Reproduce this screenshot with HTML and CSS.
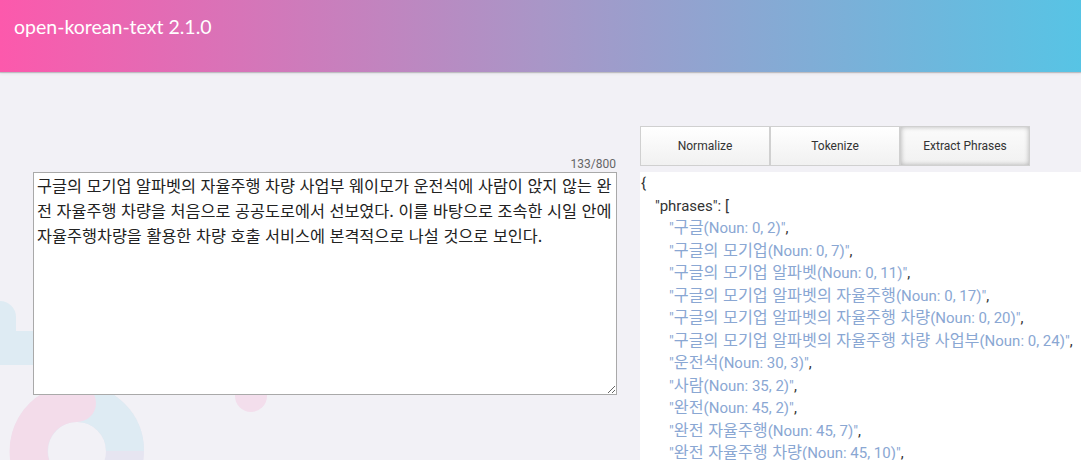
FILE: index.html
```html
<!DOCTYPE html>
<html lang="ko">
<head>
<meta charset="utf-8">
<title>open-korean-text</title>
<link rel="stylesheet" href="styles.css">
</head>
<body>
<svg class="decor" width="300" height="460" viewBox="0 0 300 460" aria-hidden="true">
  <rect x="-20" y="301" width="36" height="64" rx="16" fill="#deebf3"/>
  <rect x="-20" y="331" width="100" height="34" fill="#deebf3"/>
  <circle cx="251" cy="396" r="16" fill="#f3deec"/>
  <circle cx="77" cy="451" r="48" fill="none" stroke="#e6e5f1" stroke-width="38"/>
  <path d="M77 403 A48 48 0 0 1 125 451" fill="none" stroke="#deebf3" stroke-width="38"/>
  <path d="M35 475 A48 48 0 0 1 77 403" fill="none" stroke="#f3dcea" stroke-width="38" stroke-linecap="round"/>
</svg>
<header class="topbar">
  <h1 class="title">open-korean-text 2.1.0</h1>
</header>
<main class="main">
  <section class="input-col">
    <div class="counter">133/800</div>
    <textarea class="input-text">구글의 모기업 알파벳의 자율주행 차량 사업부 웨이모가 운전석에 사람이 앉지 않는 완전 자율주행 차량을 처음으로 공공도로에서 선보였다. 이를 바탕으로 조속한 시일 안에 자율주행차량을 활용한 차량 호출 서비스에 본격적으로 나설 것으로 보인다.</textarea>
  </section>
  <section class="output-col">
    <div class="tabs">
      <button class="tab">Normalize</button>
      <button class="tab">Tokenize</button>
      <button class="tab active">Extract Phrases</button>
    </div>
    <div class="json">
      <div class="l0">{</div>
      <div class="l1">"phrases": [</div>
      <div class="l2"><span class="str">"<span class="ko">구글</span>(Noun: 0, 2)"</span>,</div>
      <div class="l2"><span class="str">"<span class="ko">구글의 모기업</span>(Noun: 0, 7)"</span>,</div>
      <div class="l2"><span class="str">"<span class="ko">구글의 모기업 알파벳</span>(Noun: 0, 11)"</span>,</div>
      <div class="l2"><span class="str">"<span class="ko">구글의 모기업 알파벳의 자율주행</span>(Noun: 0, 17)"</span>,</div>
      <div class="l2"><span class="str">"<span class="ko">구글의 모기업 알파벳의 자율주행 차량</span>(Noun: 0, 20)"</span>,</div>
      <div class="l2"><span class="str">"<span class="ko">구글의 모기업 알파벳의 자율주행 차량 사업부</span>(Noun: 0, 24)"</span>,</div>
      <div class="l2"><span class="str">"<span class="ko">운전석</span>(Noun: 30, 3)"</span>,</div>
      <div class="l2"><span class="str">"<span class="ko">사람</span>(Noun: 35, 2)"</span>,</div>
      <div class="l2"><span class="str">"<span class="ko">완전</span>(Noun: 45, 2)"</span>,</div>
      <div class="l2"><span class="str">"<span class="ko">완전 자율주행</span>(Noun: 45, 7)"</span>,</div>
      <div class="l2"><span class="str">"<span class="ko">완전 자율주행 차량</span>(Noun: 45, 10)"</span>,</div>
    </div>
  </section>
</main>
</body>
</html>
```
FILE: styles.css
```css
html, body {
  margin: 0;
  padding: 0;
  height: 460px;
  overflow: hidden;
}
body {
  background: #f2f1f6;
  font-family: Roboto, "Noto Sans CJK KR", sans-serif;
  position: relative;
}
.decor {
  position: absolute;
  left: 0;
  top: 0;
  z-index: 0;
}
.topbar {
  position: relative;
  z-index: 1;
  height: 72px;
  background: linear-gradient(to right, #fc59ac 0%, #a996c7 50%, #57c4e5 100%);
  box-shadow: 0 1px 1px rgba(0, 0, 0, 0.18), 0 2px 3px rgba(0, 0, 0, 0.05);
}
.title {
  margin: 0;
  padding: 15px 0 0 14px;
  font-family: Lato, "Open Sans", sans-serif;
  font-weight: 400;
  font-size: 19.5px;
  line-height: 24px;
  color: #ffffff;
}
.main {
  position: relative;
  z-index: 1;
  display: flex;
  gap: 23px;
  padding: 54px 0 0 33px;
}
.input-col {
  width: 584px;
  padding-top: 30px;
  display: flex;
  flex-direction: column;
}
.counter {
  text-align: right;
  font-size: 12px;
  line-height: 16px;
  color: #666666;
  padding-right: 1px;
}
.input-text {
  box-sizing: border-box;
  width: 584px;
  height: 223px;
  margin: 0;
  padding: 0 3px;
  border: 1px solid #a9a9a9;
  background: #ffffff;
  font-family: "Noto Sans CJK KR", sans-serif;
  font-size: 16.3px;
  line-height: 25px;
  color: #222222;
  resize: both;
  outline: none;
}
.output-col {
  flex: 1;
  display: flex;
  flex-direction: column;
}
.tabs {
  display: flex;
  height: 40px;
  margin-bottom: 6px;
}
.tab {
  box-sizing: border-box;
  width: 130px;
  height: 40px;
  margin: 0;
  border: 1px solid #d0d0d0;
  background: linear-gradient(to bottom, #ffffff 0%, #f1f1f1 100%);
  font-family: Roboto, sans-serif;
  font-size: 12px;
  color: #333333;
  padding: 0;
}
.tab.active {
  box-shadow: inset 0 0 5px rgba(0, 0, 0, 0.28);
  background: linear-gradient(to bottom, #fbfbfb 0%, #f1f1f1 100%);
}
.json {
  background: #ffffff;
  padding: 0 0 0 1px;
  font-size: 15px;
  line-height: 22.5px;
  color: #333333;
  white-space: nowrap;
  min-height: 300px;
}
.l1 {
  padding-left: 14px;
}
.l2 {
  padding-left: 28px;
}
.str {
  color: #8aa7d3;
}
.ko {
  font-family: "Noto Sans CJK KR", sans-serif;
  font-size: 16.2px;
  line-height: 1;
}
```
